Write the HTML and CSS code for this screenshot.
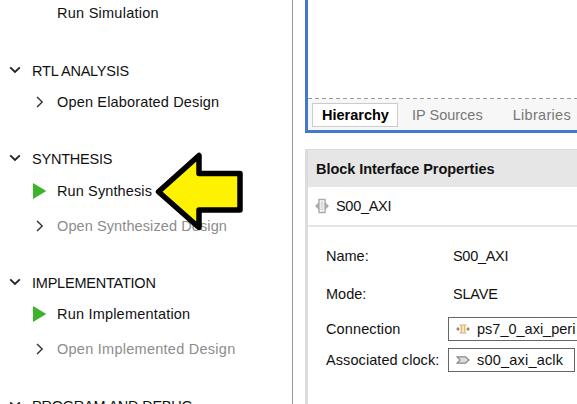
FILE: index.html
```html
<!DOCTYPE html>
<html lang="en">
<head>
<meta charset="utf-8">
<title>Flow Navigator</title>
<link rel="stylesheet" href="styles.css">
</head>
<body>
<div class="app">
  <nav class="flow">
    <div class="group">
      <div class="row item first"><span></span><span class="label sim">Run Simulation</span></div>
    </div>
    <div class="group rtl">
      <div class="row head"><svg class="chev" viewBox="0 0 12 8"><path d="M1.2 1.3 6 6l4.8-4.7"/></svg><span class="label caps">RTL ANALYSIS</span></div>
      <div class="row item"><svg class="next" viewBox="0 0 8 12"><path d="m1 1 5.2 5L1 11"/></svg><span class="label oed">Open Elaborated Design</span></div>
    </div>
    <div class="group syn">
      <div class="row head"><svg class="chev" viewBox="0 0 12 8"><path d="M1.2 1.3 6 6l4.8-4.7"/></svg><span class="label caps">SYNTHESIS</span></div>
      <div class="row item"><svg class="play" viewBox="0 0 14 16"><path d="M0 0v16l13.3-8z"/></svg><span class="label rs">Run Synthesis</span></div>
      <div class="row item off"><svg class="next" viewBox="0 0 8 12"><path d="m1 1 5.2 5L1 11"/></svg><span class="label osd">Open Synthesized Design</span></div>
    </div>
    <div class="group imp">
      <div class="row head"><svg class="chev" viewBox="0 0 12 8"><path d="M1.2 1.3 6 6l4.8-4.7"/></svg><span class="label caps">IMPLEMENTATION</span></div>
      <div class="row item"><svg class="play" viewBox="0 0 14 16"><path d="M0 0v16l13.3-8z"/></svg><span class="label ri">Run Implementation</span></div>
      <div class="row item off"><svg class="next" viewBox="0 0 8 12"><path d="m1 1 5.2 5L1 11"/></svg><span class="label oid">Open Implemented Design</span></div>
    </div>
    <div class="group prog">
      <div class="row head"><svg class="chev" viewBox="0 0 12 8"><path d="M1.2 1.3 6 6l4.8-4.7"/></svg><span class="label caps">PROGRAM AND DEBUG</span></div>
    </div>
  </nav>
  <main class="work">
    <section class="sources">
      <div class="tree"></div>
      <svg class="dash" viewBox="0 0 269 1"><path d="M0 .5h269"/></svg>
      <div class="tabs"><span class="tab active">Hierarchy</span><span class="tab ip">IP Sources</span><span class="tab lib">Libraries</span></div>
    </section>
    <section class="props">
      <h2>Block Interface Properties</h2>
      <div class="object">
        <svg class="port" viewBox="0 0 14 16"><path class="tips" d="M4 4v8L0 8zM10 4v8l4-4z"/><path class="frame" d="M4 1.5h6v13H4z"/><path class="core" d="M6 4h2v8H6z"/></svg>
        <span class="tight">S00_AXI</span>
      </div>
      <div class="fields">
        <span class="k">Name:</span><span class="v tight">S00_AXI</span>
        <span class="k">Mode:</span><span class="v slave">SLAVE</span>
        <span class="k con">Connection</span>
        <span class="box wide"><svg class="net" viewBox="0 0 14 10"><path class="ends" d="M0 5h4M10 5h4M3.500 1h7M3.500 9h7"/><path class="dots" d="M1 3.500h2v3H1zM11 3.500h2v3h-2z"/><path class="bars" d="M5.500 1.500v7M8.500 1.500v7"/></svg><span>ps7_0_axi_peri</span></span>
        <span class="k assoc">Associated clock:</span>
        <span class="box"><svg class="pin" viewBox="0 0 14 8"><path d="M1 .8h8.500L13 4 9.500 7.200H1L4 4z"/></svg><span class="aclk">s00_axi_aclk</span></span>
      </div>
    </section>
  </main>
  <svg class="pointer" viewBox="0 0 90 82"><path d="M3.500 41.700 44 5.500v18h41V60H44v17.500z"/></svg>
</div>
</body>
</html>
```
FILE: styles.css
```css
* { box-sizing: border-box; }
body { margin: 0; background: #fff; overflow: hidden; }
svg { display: block; fill: none; }
.app {
  position: relative;
  display: flex;
  width: 577px;
  height: 404px;
  overflow: hidden;
  font: 14.5px/26px "Liberation Sans", Arial, sans-serif;
  color: #111;
  white-space: nowrap;
}
.flow { flex: 0 0 293px; border-right: 1px solid #999; overflow: hidden; }
.row { display: grid; align-items: center; height: 26px; }
.head { grid-template-columns: 23px 1fr; padding-left: 9px; }
.item { grid-template-columns: 24px 1fr; padding-left: 33px; margin-top: 9px; }
.item.first { margin-top: 0; }
.head + .item { margin-top: 6px; }
.rtl { margin-top: 32px; }
.rtl .head + .item { margin-top: 5px; }
.syn, .imp { margin-top: 31px; }
.imp .head + .item { margin-top: 5px; }
.prog { margin-top: 31px; }
.off .label { color: #8c8c8c; }
.caps { letter-spacing: -.22px; }
.sim { letter-spacing: .25px; }
.oed { letter-spacing: .16px; }
.rs { letter-spacing: .12px; }
.osd { letter-spacing: .1px; }
.ri { letter-spacing: .2px; }
.oid { letter-spacing: .26px; }
.chev { width: 12px; height: 8px; stroke: #222; stroke-width: 1.8; margin-top: -2px; }
.next { width: 8px; height: 12px; margin-left: 3px; stroke: #333; stroke-width: 1.4; }
.play { width: 14px; height: 16px; fill: #3db32b; margin-top: -1px; }

.work { flex: 1; min-width: 0; padding-left: 12px; }
.sources { height: 133px; border: solid #4478cf; border-width: 0 0 3px 3px; }
.tree { height: 98px; }
.dash { width: 269px; height: 1px; stroke: #999; stroke-dasharray: 4 3; }
.tabs { display: flex; align-items: center; height: 31px; padding-left: 4px; background: #f7f7f7; color: #777; }
.tab.active { width: 86px; height: 24px; line-height: 22px; border: 1px solid #ccc; background: #fff; color: #000; font-weight: bold; padding-left: 9px; }
.ip { margin-left: 14px; }
.lib { margin-left: 30px; letter-spacing: .3px; }
.props { height: 260px; margin-top: 16px; border: solid #dcdcdc; border-width: 1px 0 0 3px; }
h2 { margin: 0; height: 37px; padding-left: 8px; background: #e6e6e6; font-size: 14.5px; line-height: 39px; letter-spacing: -.05px; color: #111; }
.object { display: flex; align-items: center; gap: 7px; height: 40px; padding-left: 7px; border-bottom: 2px solid #e4e4e4; }
.tight { letter-spacing: -.3px; }
.slave { letter-spacing: -.2px; }
.con { letter-spacing: .12px; }
.assoc { letter-spacing: .08px; }
.aclk { letter-spacing: .2px; }
.port { width: 14px; height: 16px; }
.tips { fill: #aaa; }
.frame { fill: #fff; stroke: #aaa; stroke-width: 1.4; }
.core { fill: #eee; stroke: #bbb; stroke-width: .6; }
.fields { display: grid; grid-template-columns: 122px 1fr; grid-template-rows: 38px 38px 31px 31px; align-items: center; padding: 10px 0 0 18px; }
.v { padding-left: 5px; }
.box { display: flex; align-items: center; gap: 7px; width: 127px; height: 24px; padding-left: 7px; border: 1px solid #666; line-height: 22px; }
.wide { width: 160px; }
.net { width: 14px; height: 10px; }
.ends { stroke: #aaa; }
.dots { fill: #888; }
.bars { stroke: #f3b94f; stroke-width: 1.8; }
.pin { width: 14px; height: 8px; stroke: #888; stroke-width: 1.2; fill: #ddd; }
.pointer { position: absolute; left: 155px; top: 150px; width: 90px; height: 82px; fill: #fff200; stroke: #000; stroke-width: 5.5; stroke-linejoin: round; }
```
